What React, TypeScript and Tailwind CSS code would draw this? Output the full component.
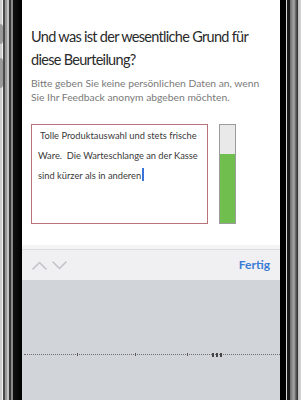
import React from 'react';

function FrameLeft() {
  return (
    <div className="relative h-full w-[22px] shrink-0 bg-[linear-gradient(90deg,#cfcfcf_0px,#cfcfcf_2px,#f2f2f2_2px,#f2f2f2_3px,#4a4a4a_3px,#4a4a4a_5px,#9a9a9a_5px,#9a9a9a_7px,#c4c4c4_7px,#c4c4c4_9px,#3a3a3a_9px,#3a3a3a_11px,#8a8a8a_11px,#8a8a8a_13px,#111_13px,#000_22px)]">
      <div className="absolute left-0 top-[24px] h-[20px] w-[3px] rounded-r-sm bg-[#9a9a9a]" />
      <div className="absolute left-0 top-[58px] h-[30px] w-[3px] rounded-r-sm bg-[#9a9a9a]" />
    </div>
  );
}

function FrameRight() {
  return (
    <div className="h-full w-[21px] shrink-0 bg-[linear-gradient(90deg,#000_0px,#000_6px,#d8d8d8_6px,#d8d8d8_7px,#1a1a1a_7px,#1a1a1a_10px,#6a6a6a_10px,#a8a8a8_14px,#5a5a5a_16px,#2a2a2a_18px,#bdbdbd_18px,#d6d6d6_21px)]" />
  );
}

function Chevron({ up }: { up?: boolean }) {
  return (
    <svg width="15" height="9" viewBox="0 0 15 9" fill="none" stroke="#c3c3c8" strokeWidth="1.6" strokeLinecap="round" strokeLinejoin="round">
      <path d={up ? 'M1 8 L7.5 1.5 L14 8' : 'M1 1 L7.5 7.5 L14 1'} />
    </svg>
  );
}

export default function App() {
  return (
    <div className="flex h-[400px] w-[301px] overflow-hidden bg-black font-['Lato',sans-serif]">
      <FrameLeft />
      <div className="flex h-full w-[258px] shrink-0 flex-col overflow-hidden">
        {/* Form area */}
        <div className="h-[245px] whitespace-nowrap bg-white px-[9px] pt-[25px]">
          <h1 className="text-[14.5px] leading-[23px] tracking-[-0.7px] text-[#2a2a2a]">
            Und was ist der wesentliche Grund für
            <br />
            diese Beurteilung?
          </h1>
          <p className="mt-[6px] text-[10.3px] leading-[13.5px] text-[#7a7a7a]">
            Bitte geben Sie keine persönlichen Daten an, wenn
            <br />
            Sie Ihr Feedback anonym abgeben möchten.
          </p>
          <div className="mt-[20px] flex items-start gap-[11px]">
            <div className="h-[100px] w-[177px] border border-[#b8737a] px-[6px] pt-[1px] text-[9.3px] leading-[20px] text-[#3a3a3a]">
              &nbsp;Tolle Produktauswahl und stets frische
              <br />
              Ware.&nbsp; Die Warteschlange an der Kasse
              <br />
              sind kürzer als in anderen
              <span className="ml-px inline-block h-[13px] w-[1.5px] translate-y-[2px] bg-[#3b74d9]" />
            </div>
            <div className="flex h-[100px] w-[17px] flex-col border border-[#9c9c9c] bg-[#e9e9ea]">
              <div className="flex-1" />
              <div className="h-[69px] bg-[#70bf4e]" />
            </div>
          </div>
        </div>
        <div className="h-[4px] bg-[#f4f4f5]" />
        {/* Keyboard toolbar */}
        <div className="flex h-[31px] items-center justify-between border-t border-[#dcdcde] bg-[#f0f0f2] pl-[10px] pr-[10px]">
          <div className="flex items-center gap-[5px]">
            <Chevron up />
            <Chevron />
          </div>
          <span className="text-[12px] font-bold text-[#3a7bd5]">Fertig</span>
        </div>
        {/* Keyboard */}
        <div className="relative flex-1 bg-[#d1d4d8]">
          <div className="absolute left-[2px] right-0 top-[74px] border-t border-dotted border-[#6f6f73]" />
          <div className="absolute left-[55px] top-[73px] h-[3px] w-[1px] bg-[#555]" />
          <div className="absolute left-[113px] top-[73px] h-[3px] w-[1px] bg-[#555]" />
          <div className="absolute left-[165px] top-[73px] h-[3px] w-[1px] bg-[#555]" />
          <div className="absolute left-[190px] top-[73px] flex gap-[2px]">
            <div className="h-[4px] w-[2px] bg-[#444]" />
            <div className="h-[4px] w-[2px] bg-[#444]" />
            <div className="h-[4px] w-[2px] bg-[#444]" />
          </div>
        </div>
      </div>
      <FrameRight />
    </div>
  );
}
